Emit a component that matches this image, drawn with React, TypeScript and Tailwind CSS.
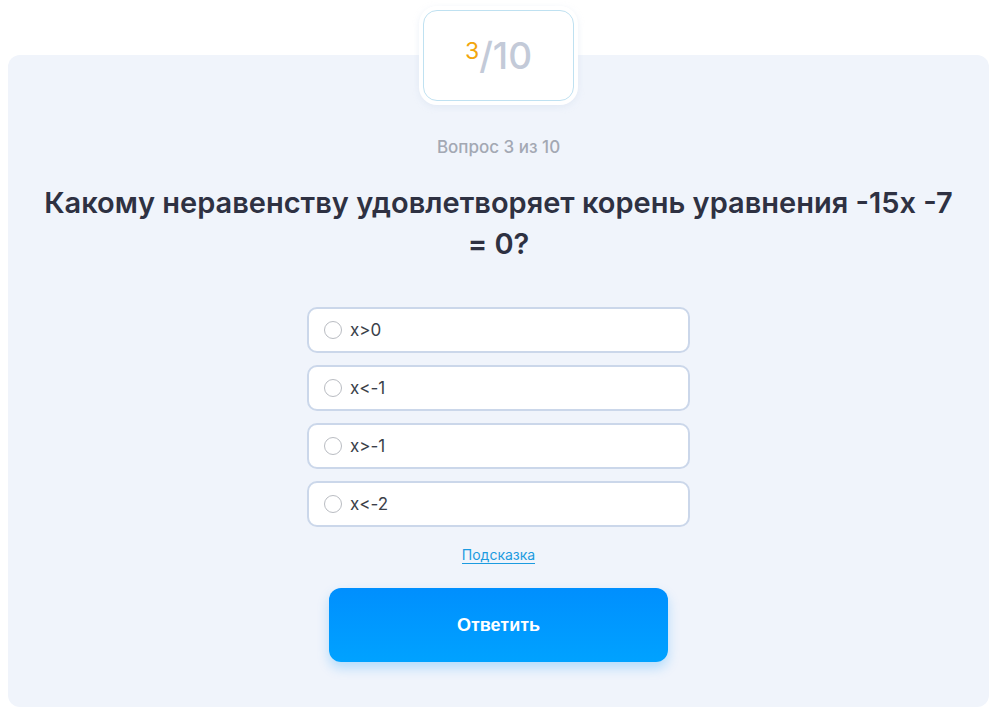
import * as React from "react";

const options = ["x>0", "x<-1", "x>-1", "x<-2"];

const App = () => {
    const [selected, setSelected] = React.useState<number | null>(null);

    return (
        <div className="min-h-[716px] bg-white px-2 pt-[6px] pb-[9px] font-['Inter',sans-serif]">
            <div className="relative flex flex-col items-center">
                {/* Счётчик вопросов */}
                <div className="relative z-10 rounded-[18px] bg-white p-[4px] shadow-[0_2px_6px_rgba(200,215,235,0.35)]">
                    <div className="flex h-[91px] w-[151px] items-center justify-center rounded-[14px] border border-[#bfe1f1] bg-white">
                        <span className="mb-[8px] text-[23px] leading-none text-[#f2a60c]">3</span>
                        <span className="text-[37px] font-medium leading-none text-[#c3cad8]">/10</span>
                    </div>
                </div>

                {/* Карточка вопроса */}
                <div className="-mt-[50px] flex w-full flex-col items-center rounded-[12px] bg-[#f0f4fb] px-8 pt-[81px] pb-[45px]">
                    <div className="text-[17px] font-medium leading-[22px] text-[#a3a8b3]">Вопрос 3 из 10</div>
                    <h1 className="mt-[24px] text-center text-[29px] font-semibold leading-[41px] text-[#2e3142]">
                        Какому неравенству удовлетворяет корень уравнения -15x -7 = 0?
                    </h1>

                    <div className="mt-[43px] flex w-[383px] flex-col gap-3">
                        {options.map((opt, i) => (
                            <label
                                key={opt}
                                onClick={() => setSelected(i)}
                                className="flex h-[46px] cursor-pointer items-center gap-2 rounded-[10px] border-2 border-[#cbd7ea] bg-white px-[15px]"
                            >
                                <span className={`flex h-[18px] w-[18px] items-center justify-center rounded-full border ${selected === i ? "border-[#0094ff]" : "border-[#b9bcc2]"}`}>
                                    {selected === i && <span className="h-[10px] w-[10px] rounded-full bg-[#0094ff]" />}
                                </span>
                                <span className="text-[17px] leading-none text-[#3b3f4a]">{opt}</span>
                            </label>
                        ))}
                    </div>

                    <a className="mt-[19px] border-b border-[#1c9be0] text-[14px] leading-[17px] text-[#1c9be0]">Подсказка</a>

                    <button className="mt-[24px] h-[74px] w-[339px] rounded-[12px] bg-gradient-to-b from-[#008ffe] to-[#00a2ff] font-['Liberation_Sans',sans-serif] text-[18px] font-bold text-white shadow-[0_6px_12px_rgba(0,150,255,0.25)]">
                        Ответить
                    </button>
                </div>
            </div>
        </div>
    );
};

export default App;
